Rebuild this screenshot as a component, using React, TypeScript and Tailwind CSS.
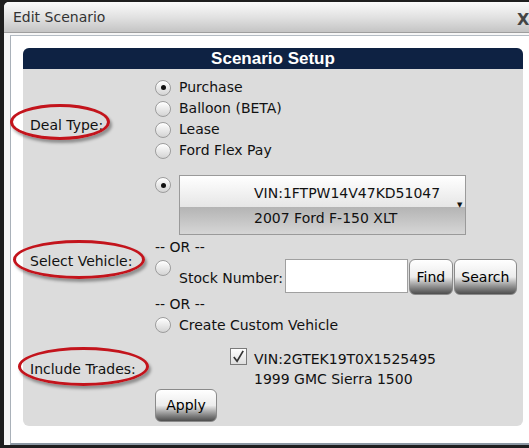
const font = "font-['DejaVu_Sans',Verdana,sans-serif]";

const Radio = ({ checked = false, className = "" }: { checked?: boolean; className?: string }) => (
  <span
    className={`flex h-[16px] w-[16px] shrink-0 items-center justify-center rounded-full border border-[#9c9c9c] bg-gradient-to-b from-white to-[#d4d4d4] shadow-[inset_0_1px_1px_rgba(255,255,255,0.9)] ${className}`}
  >
    {checked && <span className="h-[5px] w-[5px] rounded-full bg-[#111]" />}
  </span>
);

const Glossy = ({ label, className = "" }: { label: string; className?: string }) => (
  <button
    className={`flex items-center justify-center rounded-[6px] border border-[#8a8a8a] bg-gradient-to-b from-white via-[#ececec] to-[#4e4e4e] text-[14px] text-black ${font} ${className}`}
  >
    {label}
  </button>
);

const Marked = ({ text, ring, top }: { text: string; ring: string; top: string }) => (
  <div className={`relative ml-[7px] w-fit text-[14px] leading-[16px] text-[#111] ${top}`}>
    {text}
    <span
      className={`pointer-events-none absolute rounded-[50%] border-[3px] border-[#c3141c] shadow-[2px_3px_3px_rgba(0,0,0,0.35)] ${ring}`}
    />
  </div>
);

export default function App() {
  return (
    <div className={`h-[448px] w-[529px] overflow-hidden bg-[#1e1e1e] ${font}`}>
      <div className="ml-[4px] mt-[2px] w-[540px] rounded-t-[5px] bg-[#f6f6f6]">
        {/* title bar */}
        <div className="relative flex h-[31px] items-center rounded-t-[5px] border-b border-[#9e9e9e] bg-gradient-to-b from-[#fafafa] via-[#e2e2e2] to-[#c4c4c4] pl-[9px] text-[14px] text-[#333]">
          Edit Scenario
          <span className="absolute left-[513px] top-[6px] text-[16px] font-bold text-[#444]">X</span>
        </div>

        <div className="ml-[6px] mt-[2px] border-l border-t border-b-2 border-l-[#a9b1b9] border-t-[#b4bcc4] border-b-[#8c98a4] bg-white pb-[17px] pl-[12px] pt-[12px]">
          <div className="w-[500px] rounded-[6px] bg-[#dcdcdc]">
            <div className="flex h-[21px] items-center justify-center rounded-t-[6px] bg-[#0e2243] font-['Liberation_Sans',Arial,sans-serif] text-[17px] font-bold text-white">
              Scenario Setup
            </div>

            <div className="pb-[4px] pt-[8px] text-[14px] text-[#111]">
              {/* deal type */}
              <div className="flex">
                <div className="w-[133px] shrink-0">
                  <Marked text="Deal Type:" top="mt-[40px]" ring="-left-[20px] -top-[13px] h-[36px] w-[100px]" />
                </div>
                <div className="flex flex-col">
                  {["Purchase", "Balloon (BETA)", "Lease", "Ford Flex Pay"].map((t, i) => (
                    <label key={t} className="flex h-[21px] items-center gap-[8px]">
                      <Radio checked={i === 0} className="-ml-[1px]" />
                      {t}
                    </label>
                  ))}
                </div>
              </div>

              {/* select vehicle */}
              <div className="mt-[14px] flex">
                <div className="w-[133px] shrink-0">
                  <Marked text="Select Vehicle:" top="mt-[78px]" ring="-left-[17px] -top-[13px] h-[39px] w-[132px]" />
                </div>
                <div className="flex flex-col">
                  <div className="flex items-start gap-[8px]">
                    <Radio checked className="-ml-[1px] mt-[2px]" />
                    <div className="relative flex h-[60px] w-[287px] flex-col border border-[#9a9a9a] text-[14px]">
                      <div className="flex h-[32px] items-end bg-gradient-to-b from-white to-[#e6e6e6] pb-[3px] pl-[74px]">
                        VIN:1FTPW14V47KD51047
                      </div>
                      <div className="flex h-[28px] items-start bg-gradient-to-b from-[#b4b4b4] to-[#d6d6d6] pl-[74px] pt-[1px]">
                        2007 Ford F-150 XLT
                      </div>
                      <span className="absolute left-[277px] top-[26px] text-[7px] leading-none">▼</span>
                    </div>
                  </div>
                  <div className="flex h-[24px] items-center -ml-[1px]">-- OR --</div>
                  <div className="flex h-[36px] items-start">
                    <Radio className="-ml-[1px] mt-[1px]" />
                    <span className="ml-[8px] mt-[9px]">Stock Number:</span>
                    <input className="ml-[2px] h-[34px] w-[123px] border border-[#a0a0a0] bg-white outline-none" />
                    <Glossy label="Find" className="ml-[1px] h-[36px] w-[44px]" />
                    <Glossy label="Search" className="ml-[1px] h-[36px] w-[63px]" />
                  </div>
                  <div className="flex h-[18px] items-center -ml-[1px]">-- OR --</div>
                  <label className="flex h-[24px] items-center gap-[8px]">
                    <Radio className="-ml-[1px]" />
                    Create Custom Vehicle
                  </label>
                </div>
              </div>

              {/* trades */}
              <div className="mt-[11px] flex">
                <div className="w-[133px] shrink-0">
                  <Marked text="Include Trades:" top="mt-[13px]" ring="-left-[12px] -top-[14px] h-[39px] w-[131px]" />
                </div>
                <div className="flex flex-col">
                  <div className="ml-[74px] flex items-start gap-[7px]">
                    <span className="relative flex h-[17px] w-[17px] shrink-0 items-center justify-center border border-[#7a7a7a] bg-gradient-to-b from-white to-[#dedede]">
                      <svg viewBox="0 0 16 16" className="h-[15px] w-[15px]">
                        <path d="M3 8.5 L6.5 13 L13 2" fill="none" stroke="#333" strokeWidth="1.8" />
                      </svg>
                    </span>
                    <div className="mt-[1px] leading-[20px]">
                      <div>VIN:2GTEK19T0X1525495</div>
                      <div>1999 GMC Sierra 1500</div>
                    </div>
                  </div>
                  <Glossy label="Apply" className="-ml-[1px] h-[33px] w-[62px]" />
                </div>
              </div>
            </div>
          </div>
        </div>
      </div>
    </div>
  );
}
